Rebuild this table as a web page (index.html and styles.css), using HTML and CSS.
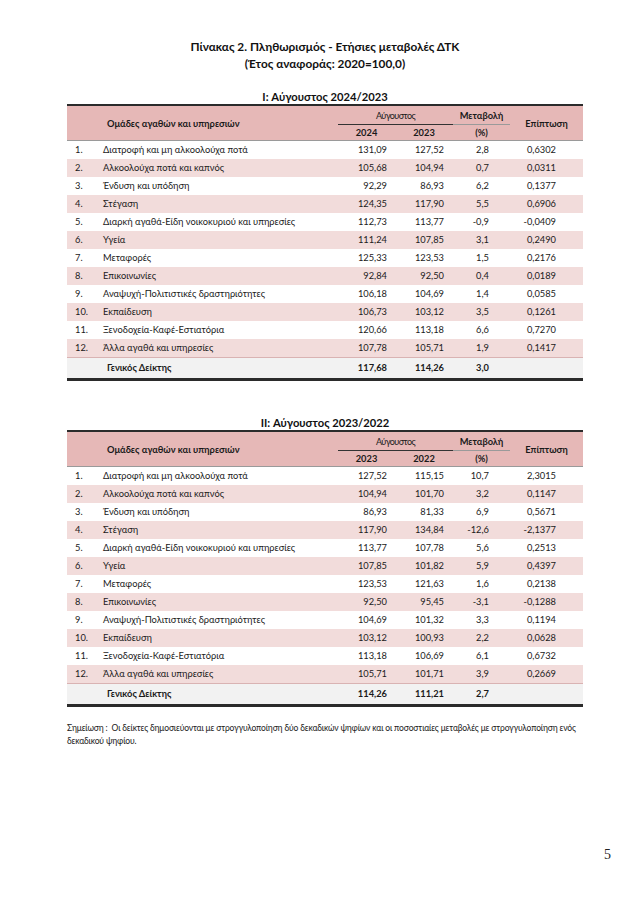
FILE: index.html
```html
<!DOCTYPE html>
<html lang="el">
<head>
<meta charset="utf-8">
<link rel="stylesheet" href="styles.css">
</head>
<body>
<div class="page">
  <h1 class="title">Πίνακας 2. Πληθωρισμός - Ετήσιες μεταβολές ΔΤΚ<br>(Έτος αναφοράς: 2020=100,0)</h1>

  <h2 class="sub sub1">I: Αύγουστος 2024/2023</h2>
  <table class="tbl">
    <colgroup><col class="c-n"><col class="c-l"><col class="c-a"><col class="c-b"><col class="c-c"><col class="c-d"></colgroup>
    <thead>
      <tr class="h1">
        <th colspan="2" rowspan="2" class="hl">Ομάδες αγαθών και υπηρεσιών</th>
        <th colspan="2" class="month"><span>Αύγουστος</span></th>
        <th class="hc top">Μεταβολή</th>
        <th rowspan="2" class="hc">Επίπτωση</th>
      </tr>
      <tr class="h2">
        <th class="yr">2024</th><th class="yr">2023</th><th class="hc bot">(%)</th>
      </tr>
    </thead>
    <tbody>
      <tr><td>1.</td><td>Διατροφή και μη αλκοολούχα ποτά</td><td>131,09</td><td>127,52</td><td>2,8</td><td>0,6302</td></tr>
      <tr class="s"><td>2.</td><td>Αλκοολούχα ποτά και καπνός</td><td>105,68</td><td>104,94</td><td>0,7</td><td>0,0311</td></tr>
      <tr><td>3.</td><td>Ένδυση και υπόδηση</td><td>92,29</td><td>86,93</td><td>6,2</td><td>0,1377</td></tr>
      <tr class="s"><td>4.</td><td>Στέγαση</td><td>124,35</td><td>117,90</td><td>5,5</td><td>0,6906</td></tr>
      <tr><td>5.</td><td>Διαρκή αγαθά-Είδη νοικοκυριού και υπηρεσίες</td><td>112,73</td><td>113,77</td><td>-0,9</td><td>-0,0409</td></tr>
      <tr class="s"><td>6.</td><td>Υγεία</td><td>111,24</td><td>107,85</td><td>3,1</td><td>0,2490</td></tr>
      <tr><td>7.</td><td>Μεταφορές</td><td>125,33</td><td>123,53</td><td>1,5</td><td>0,2176</td></tr>
      <tr class="s"><td>8.</td><td>Επικοινωνίες</td><td>92,84</td><td>92,50</td><td>0,4</td><td>0,0189</td></tr>
      <tr><td>9.</td><td>Αναψυχή-Πολιτιστικές δραστηριότητες</td><td>106,18</td><td>104,69</td><td>1,4</td><td>0,0585</td></tr>
      <tr class="s"><td>10.</td><td>Εκπαίδευση</td><td>106,73</td><td>103,12</td><td>3,5</td><td>0,1261</td></tr>
      <tr><td>11.</td><td>Ξενοδοχεία-Καφέ-Εστιατόρια</td><td>120,66</td><td>113,18</td><td>6,6</td><td>0,7270</td></tr>
      <tr class="s"><td>12.</td><td>Άλλα αγαθά και υπηρεσίες</td><td>107,78</td><td>105,71</td><td>1,9</td><td>0,1417</td></tr>
      <tr class="total"><td></td><td>Γενικός Δείκτης</td><td>117,68</td><td>114,26</td><td>3,0</td><td></td></tr>
    </tbody>
  </table>

  <h2 class="sub sub2">II: Αύγουστος 2023/2022</h2>
  <table class="tbl">
    <colgroup><col class="c-n"><col class="c-l"><col class="c-a"><col class="c-b"><col class="c-c"><col class="c-d"></colgroup>
    <thead>
      <tr class="h1">
        <th colspan="2" rowspan="2" class="hl">Ομάδες αγαθών και υπηρεσιών</th>
        <th colspan="2" class="month"><span>Αύγουστος</span></th>
        <th class="hc top">Μεταβολή</th>
        <th rowspan="2" class="hc">Επίπτωση</th>
      </tr>
      <tr class="h2">
        <th class="yr">2023</th><th class="yr">2022</th><th class="hc bot">(%)</th>
      </tr>
    </thead>
    <tbody>
      <tr><td>1.</td><td>Διατροφή και μη αλκοολούχα ποτά</td><td>127,52</td><td>115,15</td><td>10,7</td><td>2,3015</td></tr>
      <tr class="s"><td>2.</td><td>Αλκοολούχα ποτά και καπνός</td><td>104,94</td><td>101,70</td><td>3,2</td><td>0,1147</td></tr>
      <tr><td>3.</td><td>Ένδυση και υπόδηση</td><td>86,93</td><td>81,33</td><td>6,9</td><td>0,5671</td></tr>
      <tr class="s"><td>4.</td><td>Στέγαση</td><td>117,90</td><td>134,84</td><td>-12,6</td><td>-2,1377</td></tr>
      <tr><td>5.</td><td>Διαρκή αγαθά-Είδη νοικοκυριού και υπηρεσίες</td><td>113,77</td><td>107,78</td><td>5,6</td><td>0,2513</td></tr>
      <tr class="s"><td>6.</td><td>Υγεία</td><td>107,85</td><td>101,82</td><td>5,9</td><td>0,4397</td></tr>
      <tr><td>7.</td><td>Μεταφορές</td><td>123,53</td><td>121,63</td><td>1,6</td><td>0,2138</td></tr>
      <tr class="s"><td>8.</td><td>Επικοινωνίες</td><td>92,50</td><td>95,45</td><td>-3,1</td><td>-0,1288</td></tr>
      <tr><td>9.</td><td>Αναψυχή-Πολιτιστικές δραστηριότητες</td><td>104,69</td><td>101,32</td><td>3,3</td><td>0,1194</td></tr>
      <tr class="s"><td>10.</td><td>Εκπαίδευση</td><td>103,12</td><td>100,93</td><td>2,2</td><td>0,0628</td></tr>
      <tr><td>11.</td><td>Ξενοδοχεία-Καφέ-Εστιατόρια</td><td>113,18</td><td>106,69</td><td>6,1</td><td>0,6732</td></tr>
      <tr class="s"><td>12.</td><td>Άλλα αγαθά και υπηρεσίες</td><td>105,71</td><td>101,71</td><td>3,9</td><td>0,2669</td></tr>
      <tr class="total"><td></td><td>Γενικός Δείκτης</td><td>114,26</td><td>111,21</td><td>2,7</td><td></td></tr>
    </tbody>
  </table>

  <p class="note">Σημείωση :&nbsp; Οι δείκτες δημοσιεύονται με στρογγυλοποίηση δύο δεκαδικών ψηφίων και οι ποσοστιαίες μεταβολές με στρογγυλοποίηση ενός δεκαδικού ψηφίου.</p>

  <div class="pagenum">5</div>
</div>
</body>
</html>
```

FILE: styles.css
```css
html, body {
  margin: 0;
  padding: 0;
  background: #fff;
}
.page {
  width: 636px;
  height: 900px;
  position: relative;
  font-family: Lato, "Open Sans", sans-serif;
  color: #1a1a1a;
  padding: 0 53px 0 67px;
  box-sizing: border-box;
}
.title {
  margin: 0;
  padding-top: 38px;
  font-size: 11.8px;
  line-height: 17px;
  text-align: center;
  font-weight: 700;
  color: #111;
}
.sub {
  margin: 0;
  font-size: 11.2px;
  font-weight: 700;
  text-align: center;
  line-height: 14px;
  color: #111;
}
.sub1 { margin-top: 18px; }
.sub2 { margin-top: 35px; }
.tbl {
  width: 516px;
  border-collapse: collapse;
  table-layout: fixed;
  font-size: 9.3px;
  margin-top: 0;
}
.c-n { width: 33px; }
.c-l { width: 238px; }
.c-a { width: 57px; }
.c-b { width: 58px; }
.c-c { width: 57px; }
.c-d { width: 73px; }
.tbl thead tr th {
  background: #e6b8b7;
  font-weight: 700;
  font-size: 9.3px;
  padding: 0;
  color: #1a1a1a;
}
.tbl thead tr.h1 th { border-top: 2px solid #2b2b2b; height: 18px; }
.tbl thead tr.h2 th { height: 15px; border-bottom: 1px solid #9a9a9a; }
.tbl thead th.hl { text-align: left; padding-left: 40px; border-bottom: 1px solid #9a9a9a; }
.tbl thead th.month {
  font-weight: 400;
  font-size: 9px;
  letter-spacing: -0.6px;
  vertical-align: middle;
}
.tbl thead th.month span { display: block; }
.tbl thead th.yr { border-top: 1px solid #333; text-align: center; }
.tbl thead th.hc { text-align: center; vertical-align: middle; border-bottom: 1px solid #9a9a9a; }
.tbl tbody td {
  height: 18px;
  padding: 0;
  white-space: nowrap;
  text-align: right;
  line-height: 18px;
}
.tbl tbody td:nth-child(1) { text-align: left; padding-left: 8px; }
.tbl tbody td:nth-child(2) { text-align: left; padding-left: 3px; }
.tbl tbody td:nth-child(3) { padding-right: 8px; }
.tbl tbody td:nth-child(4) { padding-right: 9px; }
.tbl tbody td:nth-child(5) { padding-right: 21px; }
.tbl tbody td:nth-child(6) { padding-right: 27px; }
.tbl tbody tr.s td { background: #f2dcdb; }
.tbl tbody tr.total td {
  background: #f2f2f2;
  font-weight: 700;
  height: 20px;
  border-top: 1px solid #d9b3b3;
  border-bottom: 3px solid #2b2b2b;
}
.tbl tbody tr.total td:nth-child(2) { padding-left: 7px; }
.note {
  margin: 15px 0 0 0;
  font-size: 8.5px;
  letter-spacing: -0.15px;
  line-height: 13px;
  color: #222;
}
.pagenum {
  position: absolute;
  left: 604px;
  top: 847px;
  font-family: "Liberation Serif", serif;
  font-size: 14px;
  color: #222;
}
```
